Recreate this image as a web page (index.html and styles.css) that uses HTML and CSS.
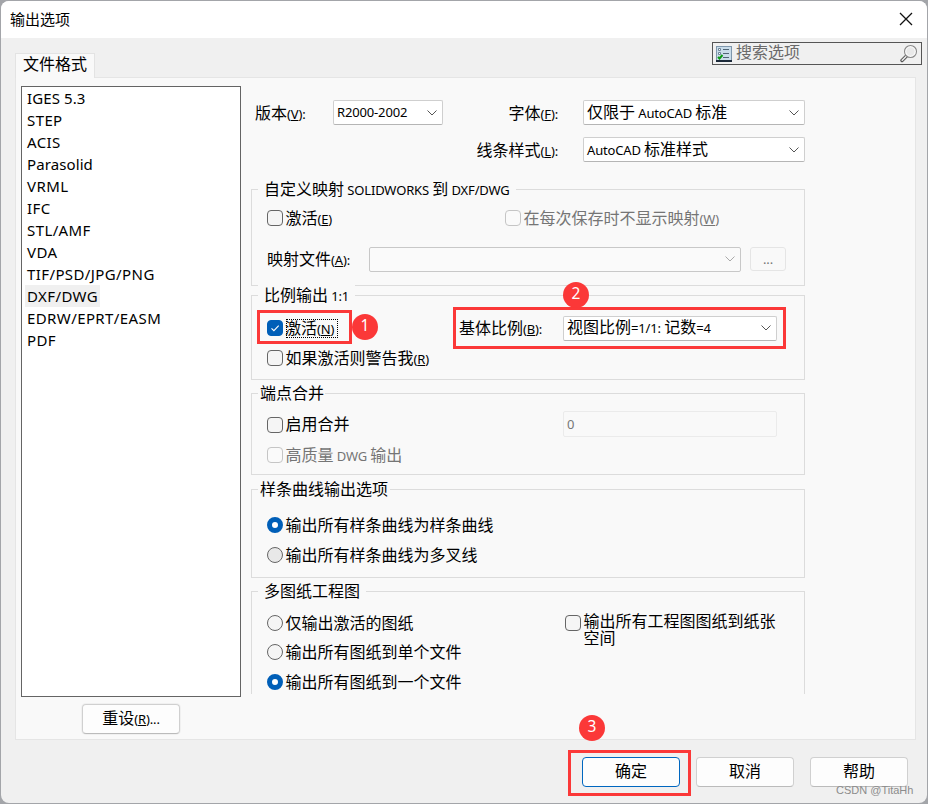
FILE: index.html
```html
<!DOCTYPE html>
<html lang="zh-CN">
<head>
<meta charset="utf-8">
<title>输出选项</title>
<link rel="stylesheet" href="styles.css">
</head>
<body>
<div class="dialog">
  <header class="titlebar">
    <span>输出选项</span>
    <svg width="14" height="14" viewBox="0 0 14 14"><path d="M1 1l12 12M13 1L1 13" stroke="#111" stroke-width="1.3" fill="none"/></svg>
  </header>
  <div class="topbar">
    <div class="tab">文件格式</div>
    <div class="search">
      <svg width="16" height="16" viewBox="0 0 16 16">
        <rect x=".5" y=".5" width="15" height="14" fill="#c9dcea" stroke="#7f97ac"/>
        <rect x="0" y="14" width="16" height="2" fill="#1c2a3a"/>
        <path d="M2.500 2.500h2v2h-2zM2.500 6.500h2v2h-2z" fill="#fff" stroke="#6d8498"/>
        <path d="M7 3.500h6M7 7.500h6M7 11.500h6" stroke="#4f6475"/>
        <path d="M2 11l1.500 1.500L6.500 9" stroke="#0a9a14" stroke-width="2" fill="none"/>
      </svg>
      <span>搜索选项</span>
      <svg width="18" height="19" viewBox="0 0 18 19"><path d="M7 11.500L2 16.500" stroke="#555" stroke-width="3.400" stroke-linecap="round"/><path d="M7 11.500L2.200 16.300" stroke="#eee" stroke-width="1.500" stroke-linecap="round"/><circle cx="10.500" cy="7.500" r="6" fill="#fbfbfb" stroke="#8a8a8a" stroke-width="1.100"/><circle cx="10.500" cy="7.500" r="4.200" fill="#e9e9e9"/></svg>
    </div>
  </div>
  <main class="panel">
    <aside class="side">
      <ul class="formats">
        <li><span class="tight">IGES 5.3</span></li><li><span>STEP</span></li><li><span>ACIS</span></li><li><span class="tight">Parasolid</span></li><li><span>VRML</span></li><li><span>IFC</span></li><li><span>STL/AMF</span></li><li><span>VDA</span></li><li><span>TIF/PSD/JPG/PNG</span></li><li><span class="sel">DXF/DWG</span></li><li><span>EDRW/EPRT/EASM</span></li><li><span>PDF</span></li>
      </ul>
      <div class="btn reset">重设<i>(<u>R</u>)...</i></div>
    </aside>
    <section class="form">
      <div class="fields">
        <div class="label start">版本<i>(<u>V</u>):</i></div>
        <div class="combo"><i>R2000-2002</i><svg class="chev" viewBox="0 0 10 6"><path d="M.5.5L5 5 9.500.5"/></svg></div>
        <div class="label">字体<i>(<u>F</u>):</i></div>
        <div class="combo"><span>仅限于<i> AutoCAD </i>标准</span><svg class="chev" viewBox="0 0 10 6"><path d="M.5.5L5 5 9.500.5"/></svg></div>
        <div class="label last">线条样式<i>(<u>L</u>):</i></div>
        <div class="combo"><span><i>AutoCAD </i>标准样式</span><svg class="chev" viewBox="0 0 10 6"><path d="M.5.5L5 5 9.500.5"/></svg></div>
      </div>

      <div class="group g1">
        <div class="legend">自定义映射<i> SOLIDWORKS </i>到<i> DXF/DWG</i></div>
        <div class="row r1"><span class="check"></span><span class="cell">激活<i>(<u>E</u>)</i></span><span class="check off"></span><span class="dim">在每次保存时不显示映射<i>(<u>W</u>)</i></span></div>
        <div class="row r2"><span class="cell">映射文件<i>(<u>A</u>):</i></span><div class="combo file"><svg class="chev" viewBox="0 0 10 6"><path d="M.5.5L5 5 9.500.5"/></svg></div><div class="more"><i>...</i></div></div>
      </div>

      <div class="group g2">
        <div class="legend">比例输出<i> 1:1</i></div>
        <div class="row r1"><span class="check on"><svg viewBox="0 0 16 16"><path d="M4.500 8.300l2.400 2.400 4.800-5"/></svg></span><span class="focus">激活<i>(<u>N</u>)</i></span><span class="base">基体比例<i>(<u>B</u>):</i></span><div class="combo scale"><span>视图比例<i>=1/1: </i>记数<i>=4</i></span><svg class="chev" viewBox="0 0 10 6"><path d="M.5.5L5 5 9.500.5"/></svg></div></div>
        <div class="row r2"><span class="check"></span><span>如果激活则警告我<i>(<u>R</u>)</i></span></div>
      </div>

      <div class="group g3">
        <div class="legend">端点合并</div>
        <div class="row r1"><span class="check"></span><span class="cell">启用合并</span><div class="input"><i>0</i></div></div>
        <div class="row r2"><span class="check off"></span><span class="dim">高质量<i> DWG </i>输出</span></div>
      </div>

      <div class="group g4">
        <div class="legend">样条曲线输出选项</div>
        <div class="row r1"><span class="radio on"></span><span>输出所有样条曲线为样条曲线</span></div>
        <div class="row r2"><span class="radio hover"></span><span>输出所有样条曲线为多叉线</span></div>
      </div>

      <div class="group g5">
        <div class="legend">多图纸工程图</div>
        <div class="cols">
          <div class="left">
            <div class="row"><span class="radio"></span><span>仅输出激活的图纸</span></div>
            <div class="row"><span class="radio"></span><span>输出所有图纸到单个文件</span></div>
            <div class="row r3"><span class="radio on"></span><span>输出所有图纸到一个文件</span></div>
          </div>
          <div class="right"><span class="check"></span><span>输出所有工程图图纸到纸张<br>空间</span></div>
        </div>
      </div>
    </section>
  </main>
  <footer class="footer">
    <div class="btn primary">确定</div><div class="btn">取消</div><div class="btn">帮助</div>
  </footer>
</div>
<div class="mark m1"></div><div class="mark m2"></div><div class="mark m3"></div>
<div class="num n1">1</div><div class="num n2">2</div><div class="num n3">3</div>
<div class="credit">CSDN @TitaHh</div>
</body>
</html>
```
FILE: styles.css
```css
* { box-sizing: border-box; }
body {
  margin: 0; width: 928px; height: 804px; padding: 1px; overflow: hidden; position: relative;
  background: #a3a5a9; color: #000;
  font: 16px/20px "Noto Sans", "Noto Sans CJK SC", sans-serif;
  white-space: nowrap;
}
i { font-style: normal; font-size: 13px; white-space: pre; letter-spacing: -.15px; }
u { text-underline-offset: 1px; text-decoration-thickness: 1px; }
ul { list-style: none; margin: 0; padding: 0; }
svg { display: block; flex: none; }

.dialog { width: 926px; height: 802px; background: #f0f0f0; border-radius: 8px; overflow: hidden; display: flex; flex-direction: column; }
.titlebar { height: 37px; flex: none; background: #fff; display: flex; align-items: center; justify-content: space-between; padding: 0 14px 2px 9px; font-size: 15px; }
.topbar { height: 39px; flex: none; display: flex; justify-content: space-between; padding: 0 5px 0 14px; }
.tab { width: 80px; height: 25px; align-self: flex-end; margin-bottom: -1px; position: relative; background: #f9f9f9; border: 1px solid #e3e3e3; border-bottom: 0; padding-left: 7px; line-height: 21px; }
.search { width: 210px; height: 23px; margin-top: 4px; border: 1px solid #555; display: flex; align-items: center; padding: 0 3px; color: #6a6a6a; gap: 4px; }
.search span { flex: 1; line-height: 19px; margin-top: -2px; }

.panel { height: 663px; flex: none; margin: 0 11px 0 14px; background: #f9f9f9; border: 1px solid #e5e5e5; display: flex; gap: 10px; padding: 8px 0 0 5px; }
.side { width: 220px; flex: none; display: flex; flex-direction: column; align-items: center; }
.formats { width: 220px; height: 611px; background: #fff; border: 1px solid #646464; padding: 0 3px; font-size: 15px; line-height: 22px; letter-spacing: .4px; }
.formats li { height: 22px; }
.formats span { display: inline-block; padding: 0 2px; height: 22px; }
.formats .tight { letter-spacing: .1px; }
.sel { background: #f0f0f0; }
.btn { width: 98px; height: 30px; background: #fdfdfd; border: 1px solid #d0d0d0; border-bottom-color: #bbb; border-radius: 4px; text-align: center; line-height: 27px; }
.reset { margin-top: 7px; box-shadow: 0 0 0 1px #f0f0f0; }

.form { width: 554px; flex: none; padding-top: 14px; }
.fields { display: grid; grid-template-columns: 82px 110px 115px 25px 222px; grid-template-rows: 25px 25px; row-gap: 12px; margin-bottom: 27px; }
.label { text-align: right; line-height: 26px; }
.label.start { text-align: left; padding-left: 4px; }
.label.last { grid-column: 2 / 4; grid-row: 2; }
.fields .combo:nth-child(4), .fields .combo:nth-child(6) { grid-column: 5; }
.combo { height: 25px; background: #fff; border: 1px solid #cfcfcf; border-bottom-color: #b5b5b5; border-radius: 2px; display: flex; align-items: center; justify-content: space-between; padding: 0 5px 0 3px; line-height: 23px; }
.chev { width: 10px; height: 6px; margin-left: auto; }
.chev path { fill: none; stroke: #555; stroke-width: 1; }

.group { border: 1px solid #dcdcdc; padding: 0 0 0 15px; }
.legend { width: 132px; height: 20px; margin: -11px 0 0 -9px; padding-left: 6px; background: #f9f9f9; }
.row { display: flex; align-items: center; height: 20px; gap: 3px; }
.check, .radio { width: 16px; height: 16px; flex: none; border: 1px solid #666; border-radius: 4px; background: #f5f5f5; }
.check + span, .radio + span { margin-left: -.5px; }
.radio { border-radius: 50%; }
.radio.hover { background: #e8e8e8; }
.radio.on { border: 5px solid #005fb8; background: #fff; }
.check.on { background: #005fb8; border-color: #005fb8; }
.check.on svg { margin: -1px; width: 16px; height: 16px; }
.check.on path { fill: none; stroke: #fff; stroke-width: 1.100; }
.check.off { border-color: #c5c5c5; background: #fafafa; }
.dim { color: #757575; }

.g1 { height: 97px; margin-bottom: 9px; }
.g1 .legend { width: 258px; }
.g1 .r1 { margin-top: 9px; }
.g1 .r1 .cell { width: 216.500px; }
.g1 .r2 { height: 26px; margin-top: 18px; gap: 0; }
.g1 .r2 .cell { width: 102px; }
.file { width: 372px; background: #fafafa; border-color: #c8c8c8; }
.file path { stroke: #aaa; }
.more { width: 36px; height: 24px; margin-left: 9px; border: 1px solid #e5e5e5; border-radius: 3px; text-align: center; color: #777; }

.g2 { height: 85px; margin-bottom: 13px; }
.g2 .legend { width: 97px; }
.g2 .r1 { height: 26px; margin-top: 10px; }
.g2 .r2 { margin-top: 7px; }
.g2 .focus { width: 52px; height: 19px; line-height: 19px; margin-left: 0; text-indent: -1px; outline: 1px dotted #000; outline-offset: -1px; }
.base { margin-left: 118px; width: 101px; }
.scale { width: 214px; }

.g3 { height: 82px; margin-bottom: 14px; }
.g3 .legend { width: 67px; padding-left: 2px; }
.g3 .r1 { height: 26px; margin-top: 8px; }
.g3 .r1 .check { margin-top: 1px; }
.g3 .r1 .cell { width: 274.500px; }
.g3 .r2 { margin-top: 8px; }
.input { width: 214px; height: 26px; border: 1px solid #ebebeb; border-radius: 2px; padding-left: 3px; line-height: 22px; color: #777; }

.g4 { height: 89px; margin-bottom: 13px; }
.g4 .legend { padding-left: 2px; }
.g4 .r1 { margin-top: 16px; }
.g4 .r2 { margin-top: 10px; }

.g5 { height: 103px; border-bottom: 0; }
.g5 .legend { width: 108px; }
.cols { display: flex; padding-top: 12px; }
.left { width: 298px; display: grid; row-gap: 9px; }
.r3 { margin-top: 1px; }
.right { display: flex; gap: 3px; line-height: 17px; }
.right .check { margin-top: 2px; }

.footer { display: flex; justify-content: flex-end; gap: 16px; padding: 17px 19px 0 0; }
.primary { border-color: #0067c0; }

.mark { position: absolute; border: 3px solid #fb3838; }
.m1 { left: 257px; top: 310px; width: 95px; height: 34px; }
.m2 { left: 453px; top: 307px; width: 333px; height: 42px; }
.m3 { left: 568px; top: 750px; width: 123px; height: 46px; }
.num { position: absolute; width: 26px; height: 26px; border-radius: 50%; background: #fb3838; color: #fff; text-align: center; line-height: 23px; font-size: 15.500px; }
.n1 { left: 352px; top: 314px; }
.n2 { left: 563px; top: 282px; }
.n3 { left: 579px; top: 715px; }
.credit { position: absolute; left: 836px; top: 781px; font: 11px/18px "Liberation Sans", sans-serif; color: #8c8c8c; }
```
